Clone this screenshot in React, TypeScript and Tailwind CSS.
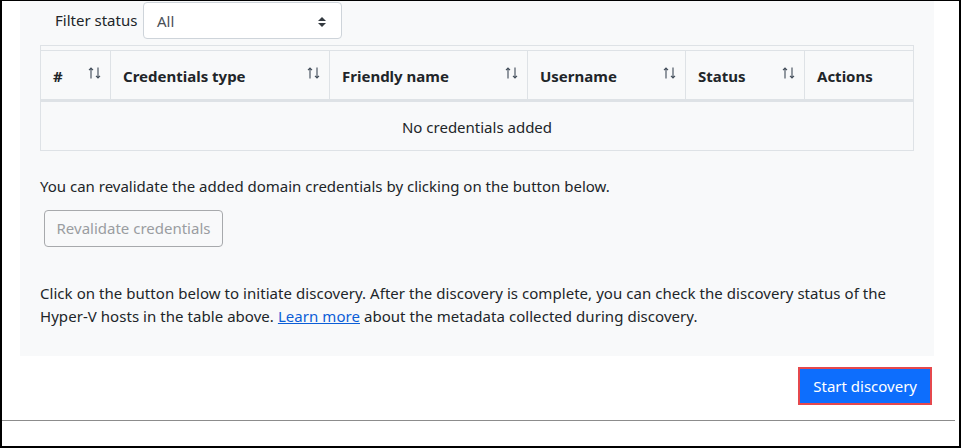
import React from "react"

const columns = [
  { label: "#", width: "w-[70px]", sortable: true },
  { label: "Credentials type", width: "w-[219px]", sortable: true },
  { label: "Friendly name", width: "w-[198px]", sortable: true },
  { label: "Username", width: "w-[158px]", sortable: true },
  { label: "Status", width: "w-[119px]", sortable: true },
  { label: "Actions", width: "w-[108px]", sortable: false },
]

function SortIcon() {
  return (
    <svg width="13" height="12" viewBox="0 0 13 12" className="shrink-0">
      <g stroke="#3f4a57" strokeWidth="1.1" fill="none">
        <path d="M3 11.5V1M1 3.2L3 1l2 2.2" />
        <path d="M10 0.5V11M8 8.8l2 2.2 2-2.2" />
      </g>
    </svg>
  )
}

function SelectArrows() {
  return (
    <svg width="8" height="10" viewBox="0 0 8 10">
      <path d="M4 0L8 4H0z M4 10L0 6h8z" fill="#343a40" />
    </svg>
  )
}

export default function App() {
  return (
    <div
      className="relative w-[961px] h-[448px] overflow-hidden bg-white border-t border-l-2 border-r-2 border-b-2 border-black text-[#212529]"
      style={{ fontFamily: '"Noto Sans", "Open Sans", sans-serif' }}
    >
      <div className="ml-[18px] w-[914px] bg-[#f8f9fa] pl-[20px] pr-[20px] pb-[28px]">
        {/* Filter */}
        <div className="flex items-center pt-px">
          <span className="ml-[15px] w-[88px] text-[15px]">Filter status</span>
          <div className="flex h-[37px] w-[199px] items-center justify-between rounded-[4px] border border-[#ced4da] bg-white pl-[13px] pr-[15px] pt-[2px] text-[15px] text-[#495057]">
            <span>All</span>
            <SelectArrows />
          </div>
        </div>

        {/* Table */}
        <div className="mt-[6px] w-[874px] border border-[#dee2e6] pt-[4px]">
          <div className="flex border-t border-b-[3px] border-[#dee2e6]">
            {columns.map((col, i) => (
              <div
                key={col.label}
                className={`${col.width} ${i < columns.length - 1 ? "border-r border-[#dee2e6]" : ""} relative flex h-[48px] items-center pl-[12px] pt-[3px] text-[15px] font-bold`}
              >
                <span>{col.label}</span>
                {col.sortable && (
                  <span className="absolute right-[9px] top-[16px]">
                    <SortIcon />
                  </span>
                )}
              </div>
            ))}
          </div>
          <div className="flex h-[48px] items-center justify-center pt-[2px] text-[15px]">No credentials added</div>
        </div>

        <p className="mt-[24px] text-[15px] leading-[23px]">
          You can revalidate the added domain credentials by clicking on the button below.
        </p>
        <button
          disabled
          className="mt-[12px] ml-[4px] h-[37px] w-[179px] rounded-[4px] border border-[#a7a9ac] text-[15px] text-[#9a9da1]"
        >
          Revalidate credentials
        </button>

        <p className="mt-[35px] text-[15px] leading-[23px] tracking-[0.05px]">
          Click on the button below to initiate discovery. After the discovery is complete, you can check the discovery
          status of the Hyper-V hosts in the table above.{" "}
          <a href="#" className="text-[#0b5ed7] underline">
            Learn more
          </a>{" "}
          about the metadata collected during discovery.
        </p>
      </div>

      <div className="flex justify-end pr-[27px] pt-[11px]">
        <div className="border-2 border-[#e5484d]">
          <button className="h-[34px] bg-[#0d6efd] px-[13px] text-[15px] text-white">Start discovery</button>
        </div>
      </div>

      <div className="mt-[15px] w-[953px] border-t border-[#8c8c8c]" />
    </div>
  )
}
